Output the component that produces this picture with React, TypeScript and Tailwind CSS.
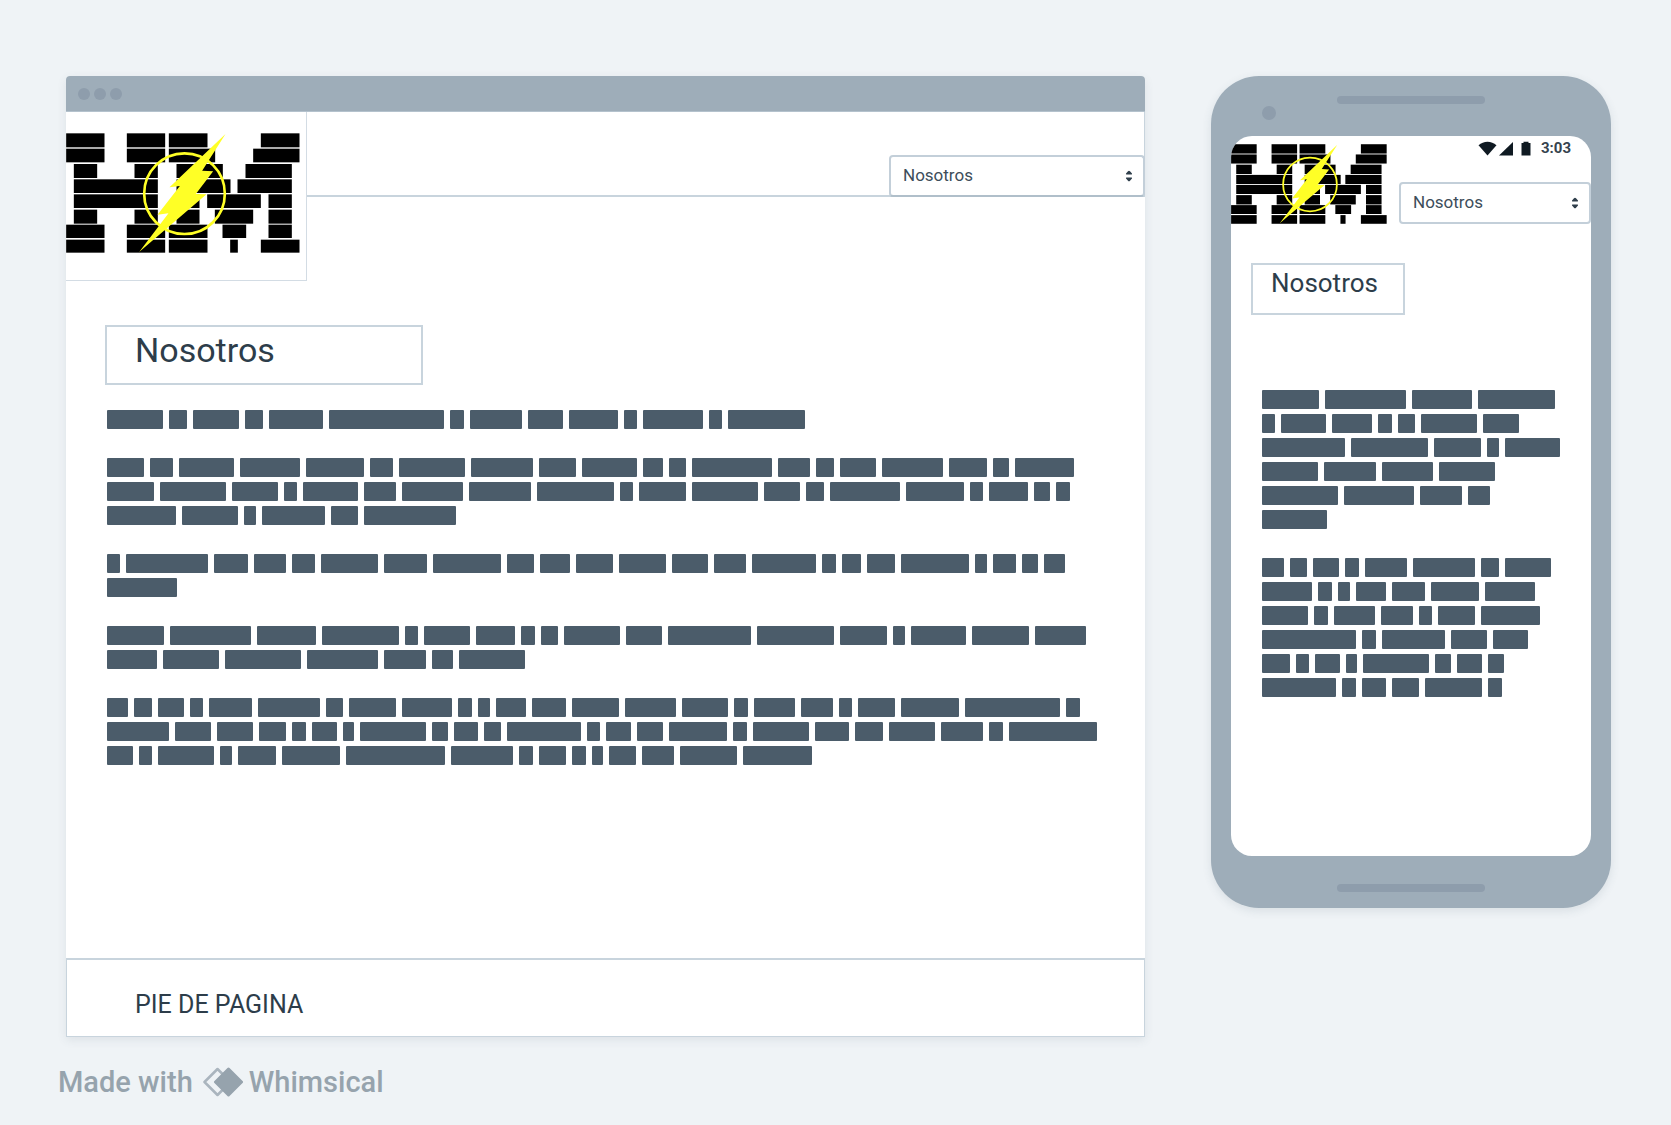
import React from "react";

type Paragraph = number[][];

const desktopText: Paragraph[] = [
  [[56, 18, 46, 18, 54, 115, 14, 52, 35, 49, 13, 60, 13, 77]],
  [
    [37, 23, 55, 60, 58, 23, 66, 62, 37, 55, 20, 17, 80, 32, 18, 36, 61, 38, 16, 59],
    [47, 66, 46, 13, 55, 32, 61, 62, 77, 13, 47, 66, 36, 18, 70, 58, 13, 39, 16, 14],
    [69, 56, 12, 63, 27, 92],
  ],
  [
    [13, 82, 34, 32, 23, 57, 43, 68, 27, 30, 37, 47, 36, 32, 64, 14, 19, 28, 68, 12, 23, 16, 21],
    [70],
  ],
  [
    [57, 81, 59, 77, 13, 46, 39, 14, 17, 56, 36, 83, 77, 47, 12, 55, 57, 51],
    [50, 56, 76, 71, 42, 21, 66],
  ],
  [
    [21, 18, 26, 13, 43, 62, 17, 47, 50, 14, 12, 30, 34, 47, 51, 46, 14, 41, 32, 13, 37, 58, 95, 14],
    [62, 36, 36, 27, 14, 25, 11, 66, 16, 24, 17, 74, 13, 25, 26, 58, 14, 56, 34, 28, 46, 42, 14, 88],
    [26, 13, 56, 12, 38, 58, 99, 62, 14, 27, 14, 11, 27, 32, 57, 69],
  ],
];

const phoneText: Paragraph[] = [
  [
    [57, 81, 60, 77],
    [13, 45, 40, 14, 17, 56, 36],
    [83, 77, 47, 12, 55],
    [56, 52, 51, 56],
    [76, 70, 42, 22],
    [65],
  ],
  [
    [22, 17, 26, 14, 42, 62, 18, 46],
    [50, 14, 12, 30, 33, 48, 50],
    [46, 14, 41, 32, 13, 37, 59],
    [94, 14, 63, 36, 35],
    [28, 13, 25, 11, 66, 16, 25, 16],
    [74, 14, 24, 27, 57, 14],
  ],
];

function RedactedText({ paragraphs }: { paragraphs: Paragraph[] }) {
  return (
    <div className="flex flex-col gap-6">
      {paragraphs.map((lines, p) => (
        <div key={p}>
          {lines.map((words, l) => (
            <div key={l} className="flex h-6 gap-1.5">
              {words.map((width, w) => (
                <span
                  key={w}
                  className="h-[19px] shrink-0 rounded-[1px] bg-[#4b5c6a]"
                  style={{ width }}
                />
              ))}
            </div>
          ))}
        </div>
      ))}
    </div>
  );
}

// Each brick is [x, y, width, height].
const bricks: number[][] = [
  [0, 1, 115, 42], [182, 1, 115, 42], [308, 1, 116, 42], [584, 1, 116, 42],
  [0, 47, 115, 41], [182, 47, 115, 41], [308, 47, 139, 41], [561, 47, 139, 41],
  [23, 93, 70, 42], [205, 93, 70, 42], [331, 93, 139, 42], [538, 93, 139, 42],
  [23, 139, 252, 41], [331, 139, 162, 41], [514, 139, 163, 41],
  [23, 184, 252, 41], [331, 184, 69, 41], [423, 184, 161, 41], [607, 184, 70, 41],
  [23, 230, 70, 42], [205, 230, 70, 42], [331, 230, 69, 42], [446, 230, 115, 42], [607, 230, 70, 42],
  [0, 275, 115, 40], [182, 275, 115, 40], [308, 275, 116, 40], [469, 275, 71, 40], [607, 275, 70, 40],
  [0, 320, 115, 39], [182, 320, 115, 39], [308, 320, 116, 39], [492, 320, 23, 39], [584, 320, 116, 39],
];

function Logo({ className }: { className: string }) {
  return (
    <svg viewBox="0 0 701 360" className={className} role="img" aria-label="HM">
      {bricks.map(([x, y, width, height], i) => (
        <rect key={i} x={x} y={y} width={width} height={height} fill="#000" />
      ))}
      <circle cx="355" cy="182" r="121" fill="none" stroke="#ffff26" strokeWidth="8" />
      <path
        d="M478 3 408 113 441 115 389 183 421 184 219 357 307 241 274 245 341 159 310 163Z"
        fill="#ffff26"
      />
    </svg>
  );
}

function PageSelect({ id, className }: { id: string; className: string }) {
  return (
    <div className="relative">
      <select
        id={id}
        aria-label="Sección"
        defaultValue="nosotros"
        className={`h-[42px] w-full appearance-none rounded-[4px] border-2 bg-white pl-3 text-[17px] text-[#3d4d5a] ${className}`}
      >
        <option value="nosotros">Nosotros</option>
      </select>
      <svg
        viewBox="0 0 8 12"
        className="pointer-events-none absolute top-[15px] right-3 h-3 w-2"
        fill="#2f3e4b"
        aria-hidden="true"
      >
        <path d="M4 0.700Q4.600 0.700 5 1.200L7 3.400Q7.300 4.300 6.500 4.500H1.500Q0.700 4.300 1 3.400L3 1.200Q3.400 0.700 4 0.700Z" />
        <path d="M4 11.300Q4.600 11.300 5 10.800L7 8.600Q7.300 7.700 6.500 7.500H1.500Q0.700 7.700 1 8.600L3 10.800Q3.400 11.300 4 11.300Z" />
      </svg>
    </div>
  );
}

function BrowserWindow() {
  return (
    <section className="flex min-w-0 flex-1 flex-col rounded-t-[4px] bg-white shadow-[0_3px_10px_rgba(60,80,100,0.1)]">
      <div className="flex h-9 items-center gap-1 rounded-t-[4px] border-b border-[#b4c2cd] bg-[#9eadb9] pl-3">
        <span className="size-3 rounded-full bg-[#8e9dac]" />
        <span className="size-3 rounded-full bg-[#8e9dac]" />
        <span className="size-3 rounded-full bg-[#8e9dac]" />
      </div>
      <header className="flex items-start">
        <div className="w-[241px] shrink-0 border-r border-b border-[#d3dce4] pt-[21px] pb-[27px]">
          <Logo className="h-[120px] w-[234px]" />
        </div>
        <div className="flex h-[85px] flex-1 items-end justify-end border-r border-b-2 border-[#c8d4dd]">
          <div className="-mr-px -mb-0.5 w-64">
            <PageSelect id="desktop-page" className="border-[#c3cfd9] border-b-[#b0bfca]" />
          </div>
        </div>
      </header>
      <main className="pt-11 pb-[188px]">
        <div className="ml-[39px] h-[60px] w-[318px] border-2 border-[#c8d4dd] pl-7">
          <h1 className="text-[34px] leading-[46px] text-[#2d3d4a]">Nosotros</h1>
        </div>
        <div className="mt-[25px] ml-[41px]">
          <RedactedText paragraphs={desktopText} />
        </div>
      </main>
      <footer className="h-[79px] border border-t-2 border-[#c8d4dd] pt-[25px] pl-[68px]">
        <p className="text-[25px] leading-10 text-[#2d3d4a]">PIE DE PAGINA</p>
      </footer>
    </section>
  );
}

function Phone() {
  return (
    <section className="w-[400px] shrink-0 rounded-[48px] bg-[#9eadb9] px-5 shadow-[0_3px_10px_rgba(60,80,100,0.12)]">
      <div className="relative flex h-[60px] justify-center pt-5">
        <span className="h-2 w-[148px] rounded-full bg-[#8e9dac]" />
        <span className="absolute top-[30px] left-[31px] size-3.5 rounded-full bg-[#8e9dac]" />
      </div>
      <div className="h-[720px] overflow-hidden rounded-[21px] bg-white">
        <div className="flex">
          <Logo className="mt-2 h-20 w-[156px] shrink-0" />
          <div className="flex flex-1 flex-col justify-between pt-1 pl-3">
            <div className="flex h-4 items-center justify-end pr-5">
              <svg viewBox="0 0 53 15" className="h-[15px] w-[53px]" fill="#0f1a22" aria-hidden="true">
                <path d="M0.500 4.200Q4.500 0.700 9.500 0.700Q14.500 0.700 18.500 4.200L9.500 14.500Z" />
                <path d="M35 1V14.500H21Z" />
                <path d="M43.500 2H45.500V0.700H50.500V2H52.500V14.500H43.500Z" />
              </svg>
              <span className="ml-2.5 text-[15px] leading-4 font-bold text-[#36434e]">3:03</span>
            </div>
            <PageSelect id="phone-page" className="border-[#c3cfd9]" />
          </div>
        </div>
        <div className="mt-[39px] ml-5 h-[52px] w-[154px] border-2 border-[#c8d4dd] pl-[18px]">
          <h2 className="text-[26px] leading-9 text-[#2d3d4a]">Nosotros</h2>
        </div>
        <div className="mt-[75px] ml-[31px]">
          <RedactedText paragraphs={phoneText} />
        </div>
      </div>
      <div className="flex h-[52px] justify-center pt-7">
        <span className="h-2 w-[148px] rounded-full bg-[#8e9dac]" />
      </div>
    </section>
  );
}

export default function App() {
  return (
    <div className="min-h-screen bg-[#eff3f6] pt-[76px] pr-[60px] pl-[66px] font-['Roboto',sans-serif]">
      <div className="flex items-start gap-[66px]">
        <BrowserWindow />
        <Phone />
      </div>
      <div className="mt-[27px] -ml-2 flex h-9 items-center text-[29px] leading-9 font-medium text-[#96a3ad]">
        <span>Made with</span>
        <svg viewBox="0 0 40 30" className="mr-1.5 ml-2.5 h-[30px] w-10" aria-hidden="true">
          <path d="M14.500 2 1.500 15 14.500 28 27.500 15Z" fill="none" stroke="#aab5be" strokeWidth="2.500" strokeLinejoin="round" />
          <path d="M25.500 2 12.500 15 25.500 28 38.500 15Z" fill="#96a3ad" stroke="#96a3ad" strokeWidth="3" strokeLinejoin="round" />
        </svg>
        <span>Whimsical</span>
      </div>
    </div>
  );
}
